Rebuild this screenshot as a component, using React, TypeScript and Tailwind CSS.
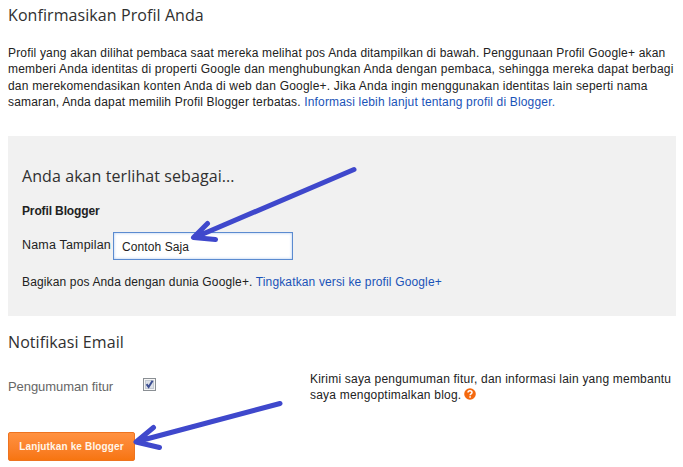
import type { ReactNode } from 'react'

const linkClass = 'text-[#1a53b8]'

function Heading({ children }: { children: ReactNode }) {
  return (
    <h2 className="font-['Open_Sans',sans-serif] text-[16px] leading-[22px] font-normal tracking-[0.08px] whitespace-nowrap text-[#303030]">
      {children}
    </h2>
  )
}

function HelpIcon() {
  return (
    <svg width="12" height="12" viewBox="0 0 12 12" className="-ml-px inline-block align-[-1px]">
      <circle cx="6" cy="6" r="5.8" fill="#f4690f" />
      <path d="M4 4.6C4 2.3 8 2.2 8 4.5C8 5.8 6.1 5.8 6.1 7.2" fill="none" stroke="#fff" strokeWidth="1.5" />
      <rect x="5.3" y="8.2" width="1.6" height="1.5" fill="#fff" />
    </svg>
  )
}

function Checkbox() {
  return (
    <svg width="13" height="13" viewBox="0 0 13 13" role="checkbox" aria-checked="true">
      <rect x="0.5" y="0.5" width="12" height="12" fill="#f6f6f6" stroke="#8a8f94" />
      <rect x="2.5" y="2.5" width="8" height="8" fill="#dde1e8" stroke="#c3c9d2" />
      <path d="M3.6 6.2L5.6 9L9.6 2.8" fill="none" stroke="#3d4f92" strokeWidth="2" />
    </svg>
  )
}

export default function App() {
  return (
    <main className="relative h-[467px] w-[683px] overflow-hidden bg-white pt-1 pl-2 font-['Liberation_Sans',Arial,sans-serif] text-[12px] leading-[16.4px] text-[#222]">
      <Heading>Konfirmasikan Profil Anda</Heading>

      <p className="mt-[18.8px] whitespace-nowrap">
        <span className="block tracking-[0.175px]">Profil yang akan dilihat pembaca saat mereka melihat pos Anda ditampilkan di bawah. Penggunaan Profil Google+ akan</span>
        <span className="block tracking-[0.21px]">memberi Anda identitas di properti Google dan menghubungkan Anda dengan pembaca, sehingga mereka dapat berbagi</span>
        <span className="block tracking-[0.2px]">dan merekomendasikan konten Anda di web dan Google+. Jika Anda ingin menggunakan identitas lain seperti nama</span>
        <span className="block tracking-[0.165px]">
          samaran, Anda dapat memilih Profil Blogger terbatas.{' '}
          <a className={linkClass}>Informasi lebih lanjut tentang profil di Blogger.</a>
        </span>
      </p>

      {/* Profile panel */}
      <section className="mt-[25.6px] h-[180px] w-[668px] bg-[#f1f1f1] pt-[29px] pl-[14px]">
        <Heading>Anda akan terlihat sebagai...</Heading>
        <h3 className="mt-4 font-bold tracking-[-0.13px]">Profil Blogger</h3>
        <div className="mt-[13px] flex h-7 items-center">
          <label className="w-[91px] pb-0.5 text-[12.5px] tracking-[0.18px] whitespace-nowrap">Nama Tampilan</label>
          <div className="flex h-7 w-[180px] items-center border border-[#5b8bd0] bg-white pt-0.5 pl-2 tracking-[0.1px] shadow-[inset_0_0_3px_#a9c6ef]">
            Contoh Saja
          </div>
        </div>
        <p className="mt-[14px] tracking-[0.14px] whitespace-nowrap">
          Bagikan pos Anda dengan dunia Google+. <a className={linkClass}>Tingkatkan versi ke profil Google+</a>
        </p>
      </section>

      {/* Email notifications */}
      <section className="mt-[15px]">
        <Heading>Notifikasi Email</Heading>
        <div className="mt-[18px] flex h-8">
          <span className="w-[135px] pt-2 text-[13px] tracking-[-0.07px] text-[#666]">Pengumuman fitur</span>
          <span className="w-[167px] pt-[7px]">
            <Checkbox />
          </span>
          <p className="tracking-[0.21px] whitespace-nowrap">
            Kirimi saya pengumuman fitur, dan informasi lain yang membantu
            <br />
            saya mengoptimalkan blog. <HelpIcon />
          </p>
        </div>
      </section>

      <button className="mt-[29px] block h-[29px] w-[127px] rounded-[2px] border border-[#ee731f] bg-linear-to-b from-[#ff9140] to-[#f7750f] pt-0.5 text-[10px] font-bold tracking-[0.15px] whitespace-nowrap text-[#fff6ea]">
        Lanjutkan ke Blogger
      </button>

      {/* Pointer arrows drawn over the form */}
      <svg
        className="pointer-events-none absolute inset-0"
        width="683"
        height="467"
        fill="none"
        stroke="#3f48cc"
        strokeWidth="5"
        strokeLinecap="round"
        strokeLinejoin="round"
      >
        <path d="M354 169.500L197 236.500M207.500 223.500L193.500 237.500L215.500 239.500" />
        <path d="M280 403.500L139 441M153.500 427.500L136 442L159.500 447.500" />
      </svg>
    </main>
  )
}
